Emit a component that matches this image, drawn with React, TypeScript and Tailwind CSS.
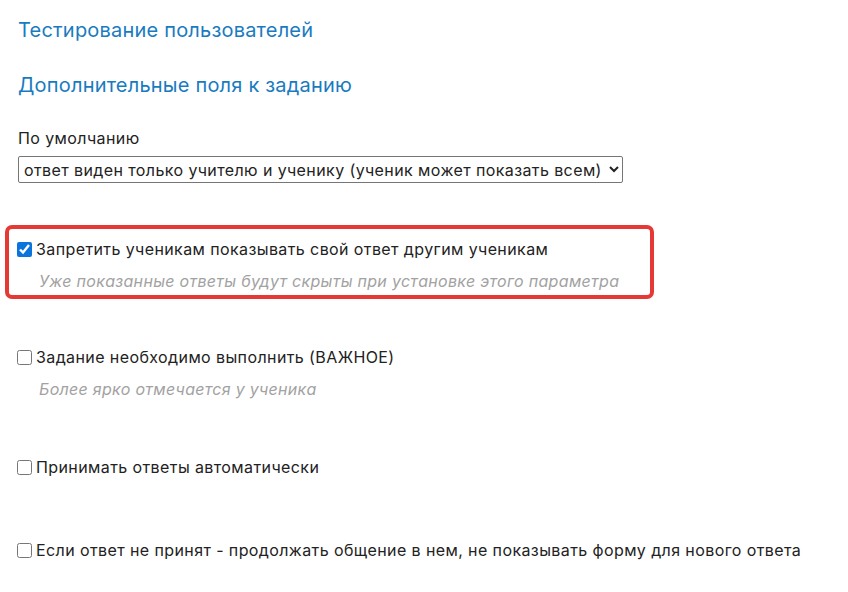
import { useState } from "react";

const options = [
  { id: "hide", label: "Запретить ученикам показывать свой ответ другим ученикам", hint: "Уже показанные ответы будут скрыты при установке этого параметра", checked: true },
  { id: "important", label: "Задание необходимо выполнить (ВАЖНОЕ)", hint: "Более ярко отмечается у ученика", checked: false },
  { id: "auto", label: "Принимать ответы автоматически", checked: false },
  { id: "continue", label: "Если ответ не принят - продолжать общение в нем, не показывать форму для нового ответа", checked: false },
];

function Option({ label, hint, checked }: { label: string; hint?: string; checked: boolean }) {
  const [on, setOn] = useState(checked);
  return (
    <div>
      <label className="flex items-center h-6 gap-[4px]">
        <input
          type="checkbox"
          checked={on}
          onChange={() => setOn(!on)}
          className="w-[15px] h-[15px] m-0 accent-[#0a74dc]"
        />
        <span>{label}</span>
      </label>
      {hint && <div className="mt-2 ml-[22px] h-6 leading-6 italic text-[#a2a2a2] tracking-[0.3px]">{hint}</div>}
    </div>
  );
}

export default function App() {
  return (
    <div className="min-h-[592px] bg-white text-[#222] text-[16px] leading-6 tracking-[0.4px]" style={{ fontFamily: "Inter, 'Noto Sans', sans-serif" }}>
      <div className="pt-[17px] pl-[18px] pr-4">
        <h2 className="text-[20px] leading-[26px] text-[#197bbf] tracking-[0.2px]">Тестирование пользователей</h2>
        <h2 className="mt-[29px] text-[20px] leading-[26px] text-[#197bbf] tracking-[0.2px]">Дополнительные поля к заданию</h2>

        <div className="mt-[28px] h-6 leading-6">По умолчанию</div>
        <select className="mt-[6px] h-[27px] w-[605px] border border-[#767676] rounded-[2px] pl-[1px] text-[#222] bg-white">
          <option>ответ виден только учителю и ученику (ученик может показать всем)</option>
          <option>ответ виден всем</option>
        </select>
      </div>

      <div className="mt-[42px] ml-[5px] w-[649px] border-4 border-[#e53935] rounded-[7px] pl-2 pt-2 pb-[2px]">
        <Option label={options[0].label} hint={options[0].hint} checked />
      </div>

      <div className="pl-[17px]">
        <div className="mt-[46px]">
          <Option label={options[1].label} hint={options[1].hint} checked={false} />
        </div>
        <div className="mt-[54px]">
          <Option label={options[2].label} checked={false} />
        </div>
        <div className="mt-[59px]">
          <Option label={options[3].label} checked={false} />
        </div>
      </div>
    </div>
  );
}
